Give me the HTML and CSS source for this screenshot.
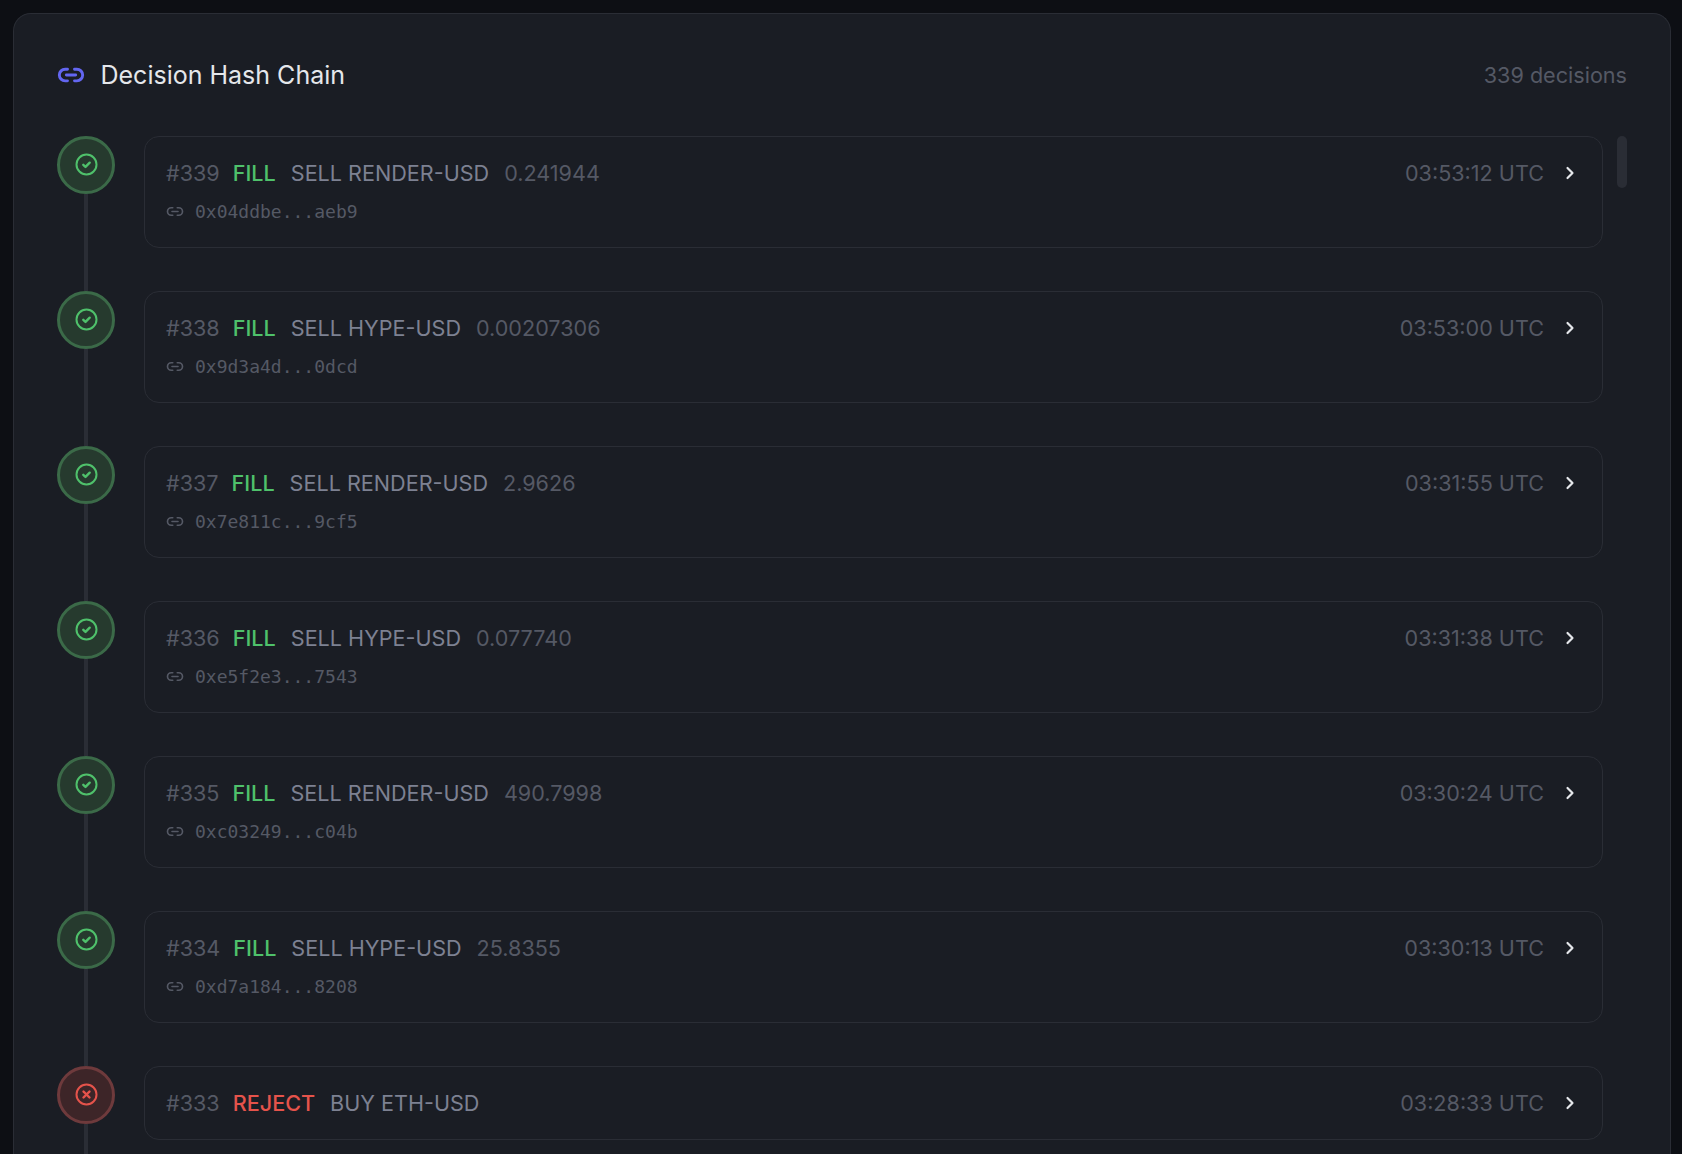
FILE: index.html
```html
<!DOCTYPE html>
<html lang="en">
<head>
<meta charset="utf-8">
<title>Decision Hash Chain</title>
<link rel="stylesheet" href="styles.css">
</head>
<body>
<svg class="defs" width="0" height="0" aria-hidden="true">
  <defs>
    <symbol id="link" viewBox="0 0 24 24" fill="none" stroke="currentColor" stroke-linecap="round" stroke-linejoin="round">
      <path d="M9 17H7A5 5 0 0 1 7 7h2"/><path d="M15 7h2a5 5 0 1 1 0 10h-2"/><line x1="8" y1="12" x2="16" y2="12"/>
    </symbol>
    <symbol id="check" viewBox="0 0 24 24" fill="none" stroke="currentColor" stroke-width="2" stroke-linecap="round" stroke-linejoin="round">
      <circle cx="12" cy="12" r="10"/><path stroke-width="2.4" d="m8.8 12.3 2.2 2.1 4.2-4.2"/>
    </symbol>
    <symbol id="cross" viewBox="0 0 24 24" fill="none" stroke="currentColor" stroke-width="2" stroke-linecap="round" stroke-linejoin="round">
      <circle cx="12" cy="12" r="10"/><path stroke-width="2.4" d="m15 9-6 6"/><path stroke-width="2.4" d="m9 9 6 6"/>
    </symbol>
    <symbol id="chev" viewBox="0 0 24 24" fill="none" stroke="currentColor" stroke-width="2.6" stroke-linecap="round" stroke-linejoin="round">
      <path d="m9 18 6-6-6-6"/>
    </symbol>
  </defs>
</svg>
<main class="panel">
  <header class="head">
    <h2 class="title"><svg class="title-icon"><use href="#link"/></svg>Decision Hash Chain</h2>
    <span class="count">339 decisions</span>
  </header>
  <div class="scroll">
    <ol class="chain">
      <li class="row">
        <div class="rail"><span class="node ok"><svg class="node-icon"><use href="#check"/></svg></span><span class="line"></span></div>
        <article class="item">
          <div class="top"><span class="num">#339</span><span class="kind fill">FILL</span><span class="pair">SELL RENDER-USD</span><span class="qty">0.241944</span><span class="time">03:53:12 UTC</span><svg class="chev"><use href="#chev"/></svg></div>
          <div class="hash"><svg class="hash-icon"><use href="#link"/></svg>0x04ddbe...aeb9</div>
        </article>
      </li>
      <li class="row">
        <div class="rail"><span class="node ok"><svg class="node-icon"><use href="#check"/></svg></span><span class="line"></span></div>
        <article class="item">
          <div class="top"><span class="num">#338</span><span class="kind fill">FILL</span><span class="pair">SELL HYPE-USD</span><span class="qty">0.00207306</span><span class="time">03:53:00 UTC</span><svg class="chev"><use href="#chev"/></svg></div>
          <div class="hash"><svg class="hash-icon"><use href="#link"/></svg>0x9d3a4d...0dcd</div>
        </article>
      </li>
      <li class="row">
        <div class="rail"><span class="node ok"><svg class="node-icon"><use href="#check"/></svg></span><span class="line"></span></div>
        <article class="item">
          <div class="top"><span class="num">#337</span><span class="kind fill">FILL</span><span class="pair">SELL RENDER-USD</span><span class="qty">2.9626</span><span class="time">03:31:55 UTC</span><svg class="chev"><use href="#chev"/></svg></div>
          <div class="hash"><svg class="hash-icon"><use href="#link"/></svg>0x7e811c...9cf5</div>
        </article>
      </li>
      <li class="row">
        <div class="rail"><span class="node ok"><svg class="node-icon"><use href="#check"/></svg></span><span class="line"></span></div>
        <article class="item">
          <div class="top"><span class="num">#336</span><span class="kind fill">FILL</span><span class="pair">SELL HYPE-USD</span><span class="qty">0.077740</span><span class="time">03:31:38 UTC</span><svg class="chev"><use href="#chev"/></svg></div>
          <div class="hash"><svg class="hash-icon"><use href="#link"/></svg>0xe5f2e3...7543</div>
        </article>
      </li>
      <li class="row">
        <div class="rail"><span class="node ok"><svg class="node-icon"><use href="#check"/></svg></span><span class="line"></span></div>
        <article class="item">
          <div class="top"><span class="num">#335</span><span class="kind fill">FILL</span><span class="pair">SELL RENDER-USD</span><span class="qty">490.7998</span><span class="time">03:30:24 UTC</span><svg class="chev"><use href="#chev"/></svg></div>
          <div class="hash"><svg class="hash-icon"><use href="#link"/></svg>0xc03249...c04b</div>
        </article>
      </li>
      <li class="row">
        <div class="rail"><span class="node ok"><svg class="node-icon"><use href="#check"/></svg></span><span class="line"></span></div>
        <article class="item">
          <div class="top"><span class="num">#334</span><span class="kind fill">FILL</span><span class="pair">SELL HYPE-USD</span><span class="qty">25.8355</span><span class="time">03:30:13 UTC</span><svg class="chev"><use href="#chev"/></svg></div>
          <div class="hash"><svg class="hash-icon"><use href="#link"/></svg>0xd7a184...8208</div>
        </article>
      </li>
      <li class="row">
        <div class="rail"><span class="node bad"><svg class="node-icon"><use href="#cross"/></svg></span><span class="line"></span></div>
        <article class="item">
          <div class="top"><span class="num">#333</span><span class="kind reject">REJECT</span><span class="pair">BUY ETH-USD</span><span class="time">03:28:33 UTC</span><svg class="chev"><use href="#chev"/></svg></div>
        </article>
      </li>
    </ol>
    <div class="thumb"></div>
  </div>
</main>
</body>
</html>
```
FILE: styles.css
```css
* { box-sizing: border-box; }
html, body { margin: 0; height: 100%; }
body {
  height: 1154px;
  overflow: hidden;
  background: #0d0f14;
  padding: 13px 11px 0 13px;
  font-family: Inter, "Liberation Sans", sans-serif;
}
.defs { position: absolute; }
.panel {
  height: 1141px;
  overflow: hidden;
  background: #1a1d24;
  border: 1px solid #2a2d35;
  border-bottom: 0;
  border-radius: 18px 18px 0 0;
  padding: 35px 43px 0 43px;
}
.head {
  display: flex;
  justify-content: space-between;
  align-items: center;
  height: 52px;
  margin-bottom: 35px;
}
.title {
  display: flex;
  align-items: center;
  gap: 15.5px;
  margin: 0;
  font-size: 25px;
  font-weight: 400;
  color: #e5e7eb;
}
.title-icon { width: 28px; height: 28px; color: #6366f1; stroke-width: 2.5; }
.count { font-size: 21.6px; color: #555965; }
.scroll { display: flex; gap: 14px; align-items: flex-start; }
.chain { flex: 1; list-style: none; margin: 0; padding: 0; }
.row { display: flex; gap: 29px; }
.rail { display: flex; flex-direction: column; align-items: center; flex: none; width: 58px; }
.node {
  flex: none;
  display: flex;
  align-items: center;
  justify-content: center;
  width: 58px;
  height: 58px;
  border-radius: 50%;
  border-width: 3px;
  border-style: solid;
}
.node.ok { background: #263a2e; border-color: #3b6a48; color: #4fc16b; }
.node.bad { background: #3d2528; border-color: #6e3a3c; color: #e5534b; }
.node-icon { width: 24px; height: 24px; transform: translate(0.5px, -0.5px); }
.line { flex: 1; width: 4px; background: #2a2d35; }
.item {
  flex: 1;
  min-width: 0;
  margin-bottom: 43px;
  border: 1px solid #2a2d35;
  border-radius: 15px;
  padding: 20px 22px 20px 21px;
}
.top { display: flex; align-items: center; height: 32px; font-size: 21.6px; }
.num { color: #555965; margin-right: 13px; }
.kind { font-weight: 500; margin-right: 15px; }
.fill { color: #4fc16b; }
.reject { color: #e5534b; }
.pair { color: #7d8192; margin-right: 15px; }
.qty { color: #555965; }
.time { margin-left: auto; color: #555965; }
.chev { width: 20px; height: 20px; color: #e5e7eb; margin-left: 16px; }
.hash {
  display: flex;
  align-items: center;
  gap: 11px;
  height: 20px;
  margin-top: 12px;
  margin-bottom: 6px;
  font-family: "DejaVu Sans Mono", "Liberation Mono", monospace;
  font-size: 18px;
  color: #555965;
}
.hash-icon { width: 18px; height: 18px; stroke-width: 2.2; transform: translateY(0.5px); }
.thumb { flex: none; width: 10px; height: 52px; border-radius: 5px; background: #2a2d35; }
```
